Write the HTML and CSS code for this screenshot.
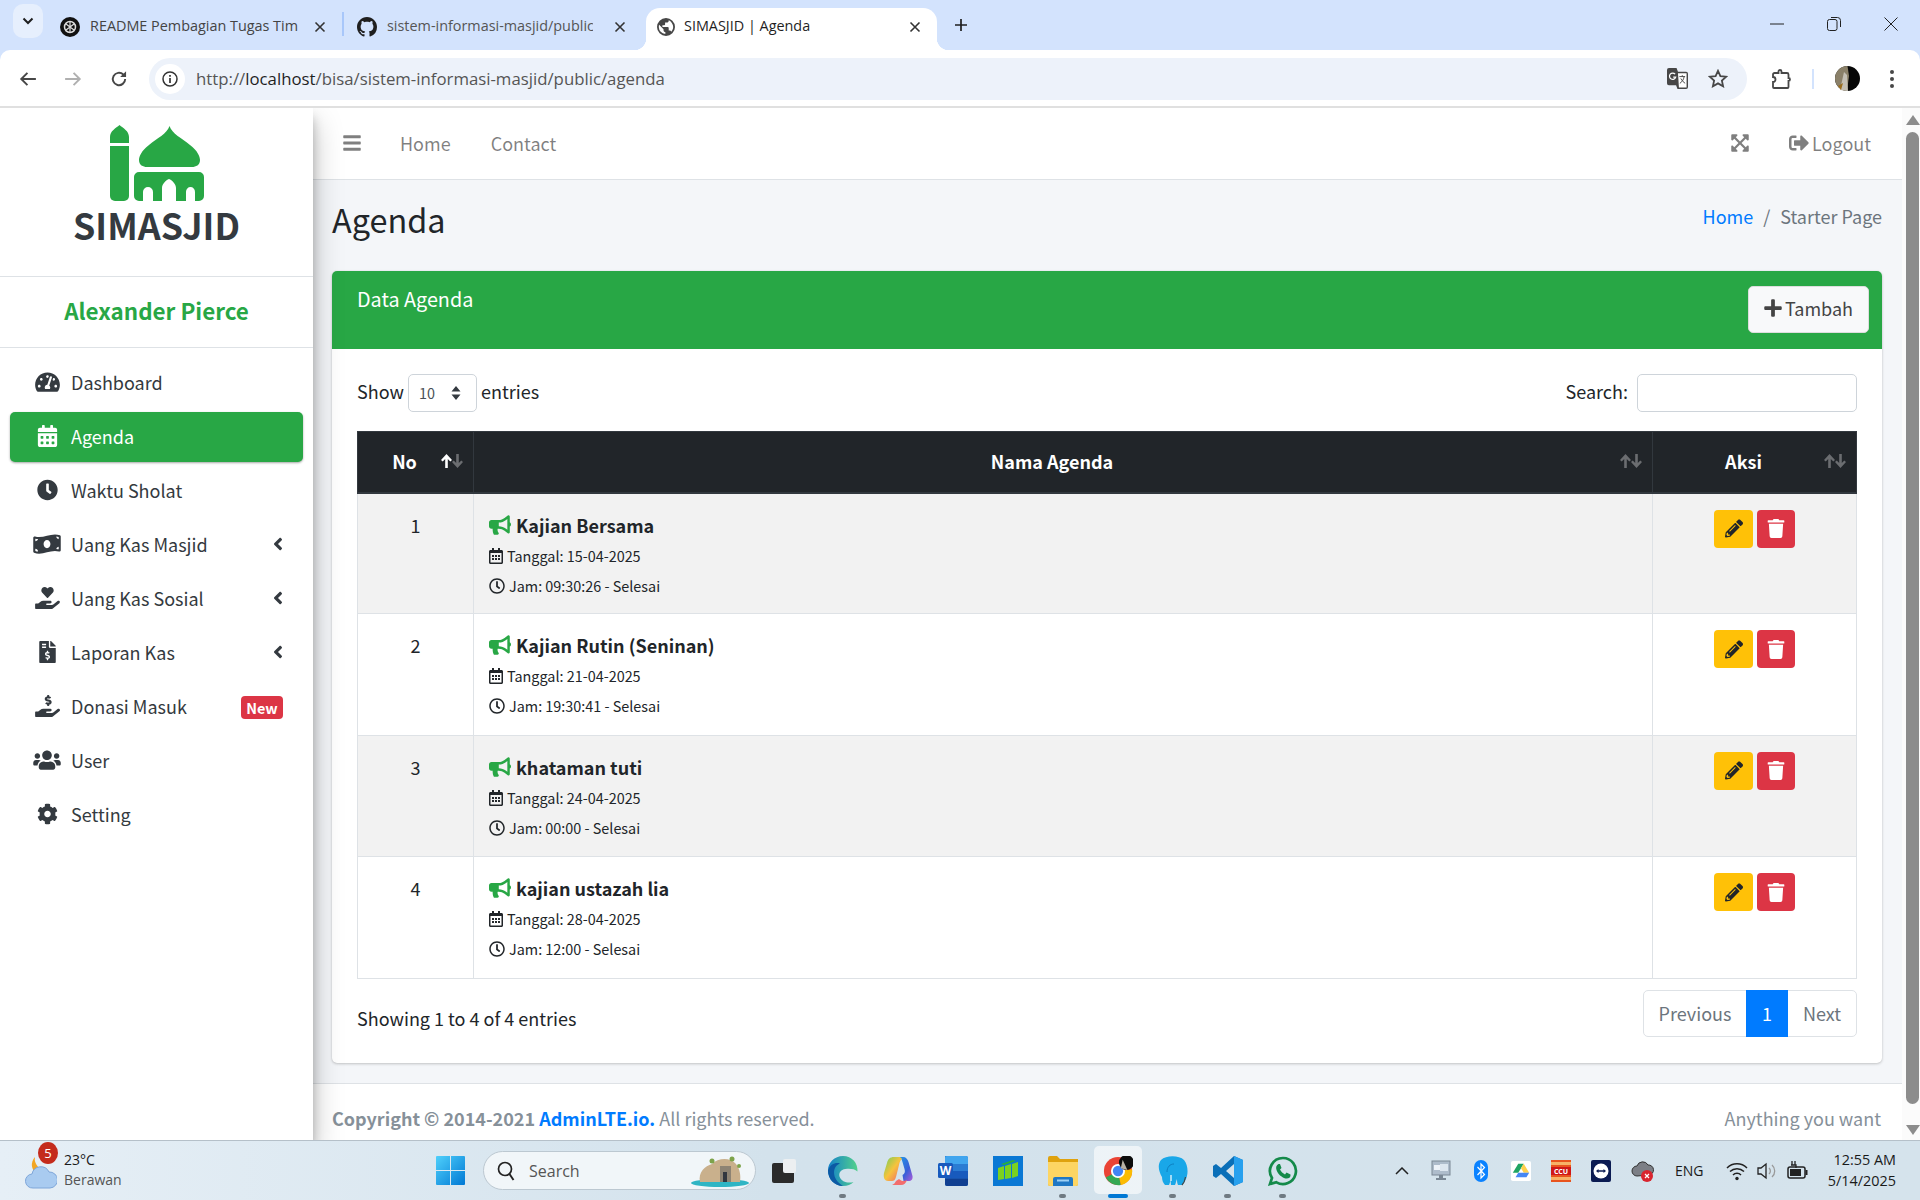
FILE: index.html
```html
<!DOCTYPE html>
<html lang="en">
<head>
    <meta charset="UTF-8">
    <meta name="viewport" content="width=device-width, initial-scale=1.0">
    <title>SIMASJID | Agenda</title>
    <link rel="stylesheet" href="styles.css">
</head>
<body>
    <svg class="sprite">
        <symbol id="i-gauge" viewBox="0 0 576 512"><path d="M288 32C128.94 32 0 160.94 0 320c0 52.8 14.25 102.26 39.06 144.8 5.61 9.62 16.3 15.2 27.44 15.2h443c11.14 0 21.83-5.58 27.44-15.2C561.75 422.26 576 372.8 576 320c0-159.06-128.94-288-288-288zm0 64c14.71 0 26.58 10.13 30.32 23.65-1.11 2.26-2.64 4.23-3.45 6.67l-9.22 27.67c-5.13 3.49-10.97 6.01-17.64 6.01-17.67 0-32-14.33-32-32S270.33 96 288 96zM96 384c-17.67 0-32-14.33-32-32s14.33-32 32-32 32 14.33 32 32-14.33 32-32 32zm48-160c-17.67 0-32-14.33-32-32s14.33-32 32-32 32 14.33 32 32-14.33 32-32 32zm246.77-72.41l-61.33 184C343.13 347.33 352 364.54 352 384c0 11.72-3.38 22.55-8.88 32H232.88c-5.5-9.45-8.88-20.28-8.88-32 0-33.94 26.5-61.43 59.9-63.59l61.34-184.01c4.17-12.56 17.73-19.45 30.36-15.17 12.57 4.19 19.35 17.79 15.17 30.36zm14.66 57.2l15.52-46.55c3.47-1.29 7.13-2.23 11.05-2.23 17.67 0 32 14.33 32 32s-14.33 32-32 32c-11.38-.01-20.89-6.28-26.57-15.22zM480 384c-17.67 0-32-14.33-32-32s14.33-32 32-32 32 14.33 32 32-14.33 32-32 32z"/></symbol>
        <symbol id="i-calendar" viewBox="0 0 448 512"><path d="M0 464c0 26.5 21.5 48 48 48h352c26.5 0 48-21.5 48-48V192H0v272zm320-196c0-6.6 5.4-12 12-12h40c6.6 0 12 5.4 12 12v40c0 6.6-5.4 12-12 12h-40c-6.6 0-12-5.4-12-12v-40zm0 128c0-6.6 5.4-12 12-12h40c6.6 0 12 5.4 12 12v40c0 6.6-5.4 12-12 12h-40c-6.6 0-12-5.4-12-12v-40zM192 268c0-6.6 5.4-12 12-12h40c6.6 0 12 5.4 12 12v40c0 6.6-5.4 12-12 12h-40c-6.6 0-12-5.4-12-12v-40zm0 128c0-6.6 5.4-12 12-12h40c6.6 0 12 5.4 12 12v40c0 6.6-5.4 12-12 12h-40c-6.6 0-12-5.4-12-12v-40zM64 268c0-6.6 5.4-12 12-12h40c6.6 0 12 5.4 12 12v40c0 6.6-5.4 12-12 12H76c-6.6 0-12-5.4-12-12v-40zm0 128c0-6.6 5.4-12 12-12h40c6.6 0 12 5.4 12 12v40c0 6.6-5.4 12-12 12H76c-6.6 0-12-5.4-12-12v-40zM400 64h-48V16c0-8.8-7.2-16-16-16h-32c-8.8 0-16 7.2-16 16v48H160V16c0-8.8-7.2-16-16-16h-32c-8.8 0-16 7.2-16 16v48H48C21.5 64 0 85.5 0 112v48h448v-48c0-26.5-21.5-48-48-48z"/></symbol>
        <symbol id="i-clock" viewBox="0 0 512 512"><path d="M256,8C119,8,8,119,8,256S119,504,256,504,504,393,504,256,393,8,256,8Zm92.49,313h0l-20,25a16,16,0,0,1-22.49,2.5h0l-67-49.72a40,40,0,0,1-15-31.23V112a16,16,0,0,1,16-16h32a16,16,0,0,1,16,16V256l58,42.5A16,16,0,0,1,348.49,321Z"/></symbol>
        <symbol id="i-money" viewBox="0 0 640 512"><path d="M621.16 54.46C582.37 38.19 543.55 32 504.75 32c-123.17-.01-246.33 62.34-369.5 62.34-30.89 0-61.76-3.92-92.65-13.72-3.47-1.1-6.95-1.62-10.35-1.62C15.04 79 0 92.32 0 110.81v317.26c0 12.63 7.23 24.6 18.84 29.46C57.63 473.81 96.45 480 135.25 480c123.17 0 246.34-62.35 369.51-62.35 30.89 0 61.76 3.92 92.65 13.72 3.47 1.1 6.95 1.62 10.35 1.62 17.21 0 32.25-13.32 32.25-31.81V83.93c-.01-12.64-7.24-24.6-18.85-29.47zM48 132.22c20.12 5.04 41.12 7.57 62.72 8.93C104.84 170.54 79 192.69 48 192.69v-60.47zm0 285v-47.78c34.37 0 62.18 27.27 63.71 61.4-22.53-1.81-43.59-6.31-63.71-13.62zM320 352c-44.19 0-80-42.99-80-96 0-53.02 35.82-96 80-96s80 42.98 80 96c0 53.03-35.83 96-80 96zm272 27.78c-17.52-4.39-35.71-6.85-54.32-8.44 5.87-26.08 27.5-45.88 54.32-49.28v57.72zm0-236.11c-30.89-3.91-54.86-29.7-55.81-61.55 19.54 2.17 38.09 6.23 55.81 12.66v48.89z"/></symbol>
        <symbol id="i-hand-heart" viewBox="0 0 576 512"><path d="M275.3 250.5c7 7.4 18.4 7.4 25.5 0l108.9-114.2c31.6-33.2 29.8-88.2-5.6-118.8-30.8-26.7-76.7-21.9-104.9 7.7L288 36.9l-11.1-11.6C248.7-4.4 202.8-9.2 172 17.5c-35.3 30.6-37.2 85.6-5.6 118.8l108.9 114.2zm290 77.6c-11.8-10.7-30.2-10-42.6 0L430.3 402c-11.3 9.1-25.4 14-40 14H272c-8.8 0-16-7.2-16-16s7.2-16 16-16h78.3c15.9 0 30.7-10.9 33.3-26.6 3.3-20-12.1-37.4-31.6-37.4H192c-27 0-53.1 9.3-74.1 26.3L71.4 384H16c-8.8 0-16 7.2-16 16v96c0 8.8 7.2 16 16 16h356.8c14.5 0 28.6-4.9 40-14L564 377c15.2-12.1 16.4-35.3 1.3-48.9z"/></symbol>
        <symbol id="i-invoice" viewBox="0 0 384 512"><path d="M377 105L279.1 7c-4.5-4.5-10.6-7-17-7H256v128h128v-6.1c0-6.3-2.5-12.4-7-16.9zm-153 31V0H24C10.7 0 0 10.7 0 24v464c0 13.3 10.7 24 24 24h336c13.3 0 24-10.7 24-24V160H248c-13.2 0-24-10.8-24-24zM64 72c0-4.42 3.58-8 8-8h80c4.42 0 8 3.58 8 8v16c0 4.42-3.58 8-8 8H72c-4.42 0-8-3.58-8-8V72zm0 80v-16c0-4.42 3.58-8 8-8h80c4.42 0 8 3.58 8 8v16c0 4.42-3.58 8-8 8H72c-4.42 0-8-3.58-8-8zm144 263.88V440c0 4.42-3.58 8-8 8h-16c-4.42 0-8-3.58-8-8v-24.29c-11.29-.58-22.27-4.52-31.37-11.35-3.9-2.93-4.1-8.77-.57-12.14l11.75-11.21c2.77-2.64 6.89-2.76 10.13-.73 3.87 2.42 8.26 3.72 12.82 3.72h28.11c6.5 0 11.8-5.92 11.8-13.19 0-5.95-3.61-11.19-8.77-12.73l-45-13.5c-18.59-5.58-31.58-23.42-31.58-43.39 0-24.52 19.05-44.44 42.67-45.07V232c0-4.42 3.58-8 8-8h16c4.42 0 8 3.58 8 8v24.29c11.29.58 22.27 4.51 31.37 11.35 3.9 2.93 4.1 8.77.57 12.14l-11.75 11.21c-2.77 2.64-6.89 2.76-10.13.73-3.87-2.43-8.26-3.72-12.82-3.72h-28.11c-6.5 0-11.8 5.92-11.8 13.19 0 5.95 3.61 11.19 8.77 12.73l45 13.5c18.59 5.58 31.58 23.42 31.58 43.39 0 24.53-19.05 44.44-42.67 45.07z"/></symbol>
        <symbol id="i-hand-usd" viewBox="0 0 576 512"><path d="M271.06,144.3l54.27,14.3a8.59,8.59,0,0,1,6.63,8.1c0,4.6-4.09,8.4-9.12,8.4h-35.6a30,30,0,0,1-11.19-2.2c-5.24-2.2-11.28-1.7-15.3,2l-19,17.5a11.68,11.68,0,0,0-2.25,2.66,11.42,11.42,0,0,0,3.88,15.74,83.42,83.42,0,0,0,34.51,11.5V240c0,8.8,7.83,16,17.37,16h17.37c9.55,0,17.38-7.2,17.38-16V222.4c32.93-3.6,57.84-31,53.5-63-3.15-23-22.46-41.3-46.56-47.7L282.68,97.4a8.59,8.59,0,0,1-6.63-8.1c0-4.6,4.09-8.4,9.12-8.4h35.6A30,30,0,0,1,332,83.1c5.23,2.2,11.28,1.7,15.3-2l19-17.5A11.31,11.31,0,0,0,368.47,61a11.43,11.43,0,0,0-3.84-15.78,83.82,83.82,0,0,0-34.52-11.5V16c0-8.8-7.82-16-17.37-16H295.37C285.82,0,278,7.2,278,16V33.6c-32.89,3.6-57.85,31-53.51,63C227.63,119.6,247,137.9,271.06,144.3ZM565.27,328.1c-11.8-10.7-30.2-10-42.6,0L430.27,402a63.64,63.64,0,0,1-40,14H272a16,16,0,0,1,0-32h78.29c15.9,0,30.71-10.9,33.25-26.6a31.2,31.2,0,0,0,.46-5.46A32,32,0,0,0,352,320H192a117.66,117.66,0,0,0-74.1,26.29L71.4,384H16A16,16,0,0,0,0,400v96a16,16,0,0,0,16,16H372.77a64,64,0,0,0,40-14L564,377a32,32,0,0,0,1.28-48.9Z"/></symbol>
        <symbol id="i-users" viewBox="0 0 640 512"><path d="M96 224c35.3 0 64-28.7 64-64s-28.7-64-64-64-64 28.7-64 64 28.7 64 64 64zm448 0c35.3 0 64-28.7 64-64s-28.7-64-64-64-64 28.7-64 64 28.7 64 64 64zm32 32h-64c-17.6 0-33.5 7.1-45.1 18.6 40.3 22.1 68.9 62 75.1 109.4h66c17.7 0 32-14.3 32-32v-32c0-35.3-28.7-64-64-64zm-256 0c61.9 0 112-50.1 112-112S381.9 32 320 32 208 82.1 208 144s50.1 112 112 112zm76.8 32h-8.3c-20.8 10-43.9 16-68.5 16s-47.6-6-68.5-16h-8.3C179.6 288 128 339.6 128 403.2V432c0 26.5 21.5 48 48 48h288c26.5 0 48-21.5 48-48v-28.8c0-63.6-51.6-115.2-115.2-115.2zm-223.7-13.4C161.5 263.1 145.6 256 128 256H64c-35.3 0-64 28.7-64 64v32c0 17.7 14.3 32 32 32h65.9c6.3-47.4 34.9-87.3 75.2-109.4z"/></symbol>
        <symbol id="i-cog" viewBox="0 0 512 512"><path d="M487.4 315.7l-42.6-24.6c4.3-23.2 4.3-47 0-70.2l42.6-24.6c4.9-2.8 7.1-8.6 5.5-14-11.1-35.6-30-67.8-54.7-94.6-3.8-4.1-10-5.1-14.8-2.3L380.8 110c-17.9-15.4-38.5-27.3-60.8-35.1V25.8c0-5.6-3.9-10.5-9.4-11.7-36.7-8.2-74.3-7.8-109.2 0-5.5 1.2-9.4 6.1-9.4 11.7V75c-22.2 7.9-42.8 19.8-60.8 35.1L88.7 85.5c-4.9-2.8-11-1.9-14.8 2.3-24.7 26.7-43.6 58.9-54.7 94.6-1.7 5.4.6 11.2 5.5 14L67.3 221c-4.3 23.2-4.3 47 0 70.2l-42.6 24.6c-4.9 2.8-7.1 8.6-5.5 14 11.1 35.6 30 67.8 54.7 94.6 3.8 4.1 10 5.1 14.8 2.3l42.6-24.6c17.9 15.4 38.5 27.3 60.8 35.1v49.2c0 5.6 3.9 10.5 9.4 11.7 36.7 8.2 74.3 7.8 109.2 0 5.5-1.2 9.4-6.1 9.4-11.7v-49.2c22.2-7.9 42.8-19.8 60.8-35.1l42.6 24.6c4.9 2.8 11 1.9 14.8-2.3 24.7-26.7 43.6-58.9 54.7-94.6 1.5-5.5-.7-11.3-5.6-14.1zM256 336c-44.1 0-80-35.9-80-80s35.9-80 80-80 80 35.9 80 80-35.9 80-80 80z"/></symbol>
        <symbol id="i-angle" viewBox="0 0 256 512"><path d="M31.7 239l136-136c9.4-9.4 24.6-9.4 33.9 0l22.6 22.6c9.4 9.4 9.4 24.6 0 33.9L127.9 256l96.4 96.4c9.4 9.4 9.4 24.6 0 33.9L201.7 409c-9.4 9.4-24.6 9.4-33.9 0l-136-136c-9.5-9.4-9.5-24.6-.1-34z"/></symbol>
        <symbol id="i-bars" viewBox="0 0 448 512"><path d="M16 132h416c8.837 0 16-7.163 16-16V76c0-8.837-7.163-16-16-16H16C7.163 60 0 67.163 0 76v40c0 8.837 7.163 16 16 16zm0 160h416c8.837 0 16-7.163 16-16v-40c0-8.837-7.163-16-16-16H16c-8.837 0-16 7.163-16 16v40c0 8.837 7.163 16 16 16zm0 160h416c8.837 0 16-7.163 16-16v-40c0-8.837-7.163-16-16-16H16c-8.837 0-16 7.163-16 16v40c0 8.837 7.163 16 16 16z"/></symbol>
        <symbol id="i-expand" viewBox="0 0 448 512"><path d="M448 344v112a23.94 23.94 0 0 1-24 24H312c-21.39 0-32.09-25.9-17-41l36.2-36.2L224 295.6 116.77 402.9 153 439c15.09 15.1 4.39 41-17 41H24a23.94 23.94 0 0 1-24-24V344c0-21.4 25.89-32.1 41-17l36.19 36.2L184.46 256 77.18 148.7 41 185c-15.1 15.1-41 4.4-41-17V56a23.94 23.94 0 0 1 24-24h112c21.39 0 32.09 25.9 17 41l-36.2 36.2L224 216.4l107.23-107.3L295 73c-15.09-15.1-4.39-41 17-41h112a23.94 23.94 0 0 1 24 24v112c0 21.4-25.89 32.1-41 17l-36.19-36.2L263.54 256l107.28 107.3L407 327.1c15.1-15.2 41-4.5 41 16.9z"/></symbol>
        <symbol id="i-logout" viewBox="0 0 512 512"><path d="M497 273L329 441c-15 15-41 4.5-41-17v-96H152c-13.3 0-24-10.7-24-24v-96c0-13.3 10.7-24 24-24h136V88c0-21.4 25.9-32 41-17l168 168c9.3 9.4 9.3 24.6 0 34zM192 436v-40c0-6.6-5.4-12-12-12H96c-17.7 0-32-14.3-32-32V160c0-17.7 14.3-32 32-32h84c6.6 0 12-5.4 12-12V76c0-6.6-5.4-12-12-12H96c-53 0-96 43-96 96v192c0 53 43 96 96 96h84c6.6 0 12-5.4 12-12z"/></symbol>
        <symbol id="i-plus" viewBox="0 0 448 512"><path d="M416 208H272V64c0-17.67-14.33-32-32-32h-32c-17.67 0-32 14.33-32 32v144H32c-17.67 0-32 14.33-32 32v32c0 17.67 14.33 32 32 32h144v144c0 17.67 14.33 32 32 32h32c17.67 0 32-14.33 32-32V304h144c17.67 0 32-14.33 32-32v-32c0-17.67-14.33-32-32-32z"/></symbol>
        <symbol id="i-bullhorn" viewBox="0 0 576 512"><path d="M576 240c0-23.63-12.95-44.04-32-55.12V32.01C544 23.26 537.02 0 512 0c-7.12 0-14.19 2.38-19.98 7.02l-85.03 68.03C364.28 109.19 310.66 128 256 128H64c-35.35 0-64 28.65-64 64v96c0 35.35 28.65 64 64 64h33.7c-1.39 10.48-2.18 21.14-2.18 32 0 39.77 9.26 77.35 25.56 110.94 5.19 10.69 16.52 17.06 28.4 17.06h74.28c26.05 0 41.69-29.84 25.9-50.56-16.4-21.52-26.15-48.36-26.15-77.44 0-11.11 1.62-21.79 4.41-32H256c54.66 0 108.28 18.81 150.98 52.95l85.03 68.03a32.023 32.023 0 0 0 19.98 7.02c24.92 0 32-22.78 32-32V295.13C563.05 284.04 576 263.63 576 240zm-96 141.42l-33.05-26.44C392.95 311.78 325.12 288 256 288v-96c69.12 0 136.95-23.78 190.95-66.98L480 98.58v282.84z"/></symbol>
        <symbol id="i-cal-line" viewBox="0 0 448 512"><path d="M148 288h-40c-6.6 0-12-5.4-12-12v-40c0-6.6 5.4-12 12-12h40c6.6 0 12 5.4 12 12v40c0 6.6-5.4 12-12 12zm108-12v-40c0-6.6-5.4-12-12-12h-40c-6.6 0-12 5.4-12 12v40c0 6.6 5.4 12 12 12h40c6.6 0 12-5.4 12-12zm96 0v-40c0-6.6-5.4-12-12-12h-40c-6.6 0-12 5.4-12 12v40c0 6.6 5.4 12 12 12h40c6.6 0 12-5.4 12-12zm-96 96v-40c0-6.6-5.4-12-12-12h-40c-6.6 0-12 5.4-12 12v40c0 6.6 5.4 12 12 12h40c6.6 0 12-5.4 12-12zm-96 0v-40c0-6.6-5.4-12-12-12h-40c-6.6 0-12 5.4-12 12v40c0 6.6 5.4 12 12 12h40c6.6 0 12-5.4 12-12zm192 0v-40c0-6.6-5.4-12-12-12h-40c-6.6 0-12 5.4-12 12v40c0 6.6 5.4 12 12 12h40c6.6 0 12-5.4 12-12zm96-260v352c0 26.5-21.5 48-48 48H48c-26.5 0-48-21.5-48-48V112c0-26.5 21.5-48 48-48h48V12c0-6.6 5.4-12 12-12h40c6.6 0 12 5.4 12 12v52h128V12c0-6.6 5.4-12 12-12h40c6.6 0 12 5.4 12 12v52h48c26.5 0 48 21.5 48 48zm-48 346V160H48v298c0 3.3 2.7 6 6 6h340c3.3 0 6-2.7 6-6z"/></symbol>
        <symbol id="i-clock-line" viewBox="0 0 512 512"><path d="M256 8C119 8 8 119 8 256s111 248 248 248 248-111 248-248S393 8 256 8zm0 448c-110.5 0-200-89.5-200-200S145.5 56 256 56s200 89.5 200 200-89.5 200-200 200zm61.8-104.4l-84.9-61.7c-3.1-2.3-4.9-5.9-4.9-9.7V116c0-6.6 5.4-12 12-12h32c6.6 0 12 5.4 12 12v141.7l66.8 48.6c5.4 3.9 6.5 11.4 2.6 16.8L334.6 349c-3.9 5.3-11.4 6.5-16.8 2.6z"/></symbol>
        <symbol id="i-pencil" viewBox="0 0 512 512"><path d="M497.9 142.1l-46.1 46.1c-4.7 4.7-12.3 4.7-17 0l-111-111c-4.7-4.7-4.7-12.3 0-17l46.1-46.1c18.7-18.7 49.1-18.7 67.9 0l60.1 60.1c18.8 18.7 18.8 49.1 0 67.9zM284.2 99.8L21.6 362.4.4 483.9c-2.9 16.4 11.4 30.6 27.8 27.8l121.5-21.3 262.6-262.6c4.7-4.7 4.7-12.3 0-17l-111-111c-4.8-4.7-12.4-4.7-17.1 0zM124.1 339.9c-5.5-5.5-5.5-14.3 0-19.8l154-154c5.5-5.5 14.3-5.5 19.8 0s5.5 14.3 0 19.8l-154 154c-5.5 5.5-14.3 5.5-19.8 0zM88 424h48v36.3l-64.5 11.3-31.1-31.1L51.7 376H88v48z"/></symbol>
        <symbol id="i-trash" viewBox="0 0 448 512"><path d="M432 32H312l-9.4-18.7A24 24 0 0 0 281.1 0H166.8a23.72 23.72 0 0 0-21.4 13.3L136 32H16A16 16 0 0 0 0 48v32a16 16 0 0 0 16 16h416a16 16 0 0 0 16-16V48a16 16 0 0 0-16-16zM53.2 467a48 48 0 0 0 47.9 45h245.8a48 48 0 0 0 47.9-45L416 128H32z"/></symbol>
        <symbol id="i-sort" viewBox="0 0 22 14"><path class="sort-up" d="M5.500 0L11 6 9.300 7.600 6.800 5V14H4.200V5L1.700 7.600 0 6z"/><path d="M16.500 14L11 8 12.700 6.400 15.200 9V0H17.800V9L20.300 6.400 22 8z"/></symbol>
        <symbol id="i-close" viewBox="0 0 12 12"><path d="M1.500 1.500l9 9M10.500 1.500l-9 9" fill="none" stroke="currentColor" stroke-width="1.600"/></symbol>
        <symbol id="i-globe" viewBox="0 0 16 16"><path d="M8 0a8 8 0 1 0 0 16A8 8 0 0 0 8 0zM1.600 8c0-.7.1-1.300.3-1.900l3.900 3.900v.8c0 .9.7 1.600 1.600 1.600v1.900A6.400 6.400 0 0 1 1.600 8zm11.100 4.300a1.600 1.600 0 0 0-1.500-1.100h-.8V8.800a.8.800 0 0 0-.8-.8H4.800V6.400h1.600a.8.800 0 0 0 .8-.8V4h1.600c.9 0 1.600-.7 1.600-1.600v-.3a6.400 6.400 0 0 1 2.300 10.200z"/></symbol>
    </svg>

    <div class="tabstrip">
        <div class="tab-list-btn">
            <svg width="12" height="8" viewBox="0 0 12 8"><path d="M1.500 1.500L6 6l4.500-4.500" fill="none" stroke="#1f1f1f" stroke-width="2"/></svg>
        </div>
        <div class="tab tab-first">
            <svg class="tab-icon" viewBox="0 0 20 20"><circle cx="10" cy="10" r="10" fill="#111"/><circle cx="10" cy="10" r="5.500" fill="none" stroke="#ddd" stroke-width="1.500"/><path d="M6 7l8 6M14 7l-8 6M10 4.500v11" stroke="#ddd" stroke-width="1.200"/></svg>
            <span class="tab-title">README Pembagian Tugas Tim</span>
            <svg class="tab-close"><use href="#i-close"/></svg>
        </div>
        <div class="tab-sep"></div>
        <div class="tab tab-second">
            <svg class="tab-icon" viewBox="0 0 16 16"><path fill="#1f1f1f" d="M8 0C3.580 0 0 3.580 0 8c0 3.540 2.290 6.530 5.470 7.590.4.070.55-.17.55-.38 0-.19-.01-.82-.01-1.490-2.010.37-2.530-.49-2.690-.94-.09-.23-.48-.94-.82-1.130-.28-.15-.68-.52-.01-.53.63-.01 1.080.58 1.230.82.720 1.210 1.870.870 2.330.660.070-.520.280-.870.510-1.070-1.780-.2-3.640-.890-3.640-3.950 0-.870.310-1.590.820-2.150-.08-.2-.36-1.020.08-2.120 0 0 .670-.210 2.200.820.640-.180 1.320-.270 2-.270s1.360.090 2 .270c1.530-1.040 2.200-.820 2.200-.820.440 1.100.160 1.920.080 2.120.510.560.820 1.270.820 2.150 0 3.070-1.870 3.750-3.650 3.950.290.250.540.730.540 1.480 0 1.070-.010 1.930-.010 2.200 0 .210.150.460.550.380A8.010 8.010 0 0 0 16 8c0-4.420-3.580-8-8-8z"/></svg>
            <span class="tab-title tab-fade">sistem-informasi-masjid/public</span>
            <svg class="tab-close"><use href="#i-close"/></svg>
        </div>
        <div class="tab tab-active">
            <svg class="tab-icon globe"><use href="#i-globe"/></svg>
            <span class="tab-title">SIMASJID | Agenda</span>
            <svg class="tab-close"><use href="#i-close"/></svg>
        </div>
        <svg class="new-tab" viewBox="0 0 14 14"><path d="M7 1v12M1 7h12" stroke="#1f1f1f" stroke-width="1.700"/></svg>
        <div class="win-buttons">
            <svg width="14" height="14" viewBox="0 0 14 14"><path d="M0 7h14" stroke="#222" stroke-width="1"/></svg>
            <svg width="14" height="14" viewBox="0 0 14 14"><rect x=".5" y="2.500" width="9.500" height="11" rx="2" fill="none" stroke="#222"/><path d="M4 .5h6.500a3 3 0 0 1 3 3V10" fill="none" stroke="#222"/></svg>
            <svg width="14" height="14" viewBox="0 0 14 14"><path d="M.5.5l13 13M13.500.5l-13 13" stroke="#222"/></svg>
        </div>
    </div>

    <div class="toolbar">
        <svg class="nav-btn" viewBox="0 0 16 16"><path d="M15 8H2M7.500 2.500L2 8l5.500 5.500" fill="none" stroke="#474747" stroke-width="1.700"/></svg>
        <svg class="nav-btn nav-forward" viewBox="0 0 16 16"><path d="M1 8h13M8.500 2.500L14 8l-5.500 5.500" fill="none" stroke="#b0b0b0" stroke-width="1.700"/></svg>
        <svg class="nav-btn nav-reload" viewBox="0 0 16 16"><path d="M13.500 8a5.500 5.500 0 1 1-1.700-4L13.500 5.500" fill="none" stroke="#474747" stroke-width="1.700"/><path d="M14.300 1v5.300H9z" fill="#474747"/></svg>
        <div class="omnibox">
            <span class="site-info"><svg width="16" height="16" viewBox="0 0 16 16"><circle cx="8" cy="8" r="7" fill="none" stroke="#333" stroke-width="1.500"/><path d="M8 7v5M8 4v1.700" stroke="#333" stroke-width="1.700"/></svg></span>
            <span class="url">http://<b>localhost</b>/bisa/sistem-informasi-masjid/public/agenda</span>
            <svg class="omni-translate" viewBox="0 0 22 22"><path d="M2 0h8l1.500 4H20a2 2 0 0 1 2 2v14a2 2 0 0 1-2 2h-9l-1.500-4H2a2 2 0 0 1-2-2V2a2 2 0 0 1 2-2z" fill="#474747"/><path d="M11.500 5.500h9v15h-8z" fill="#fff"/><path d="M13 9h6M16 7.500V9M18 9c-.5 3-2.500 6-4.500 7M14.500 11c1 2 3 4 4.500 5" stroke="#474747" fill="none"/><path d="M8.500 6.500a3.300 3.300 0 1 0 .6 3H6.500" fill="none" stroke="#fff" stroke-width="1.300"/></svg>
            <svg class="omni-star" viewBox="0 0 20 19"><path d="M10 1.800l2.400 5.300 5.800.6-4.300 3.900 1.200 5.700-5.100-2.900-5.100 2.900 1.200-5.700L1.800 7.700l5.800-.6z" fill="none" stroke="#474747" stroke-width="1.800"/></svg>
        </div>
        <svg class="tool-puzzle" viewBox="0 0 20 20"><path d="M7.500 4V2.500a1.500 1.500 0 0 1 3 0V4H16a1.500 1.500 0 0 1 1.500 1.500V9a1.500 1.500 0 0 1 0 3v6a1 1 0 0 1-1 1H3a1 1 0 0 1-1-1v-5a2 2 0 0 0 0-5V5.500A1.500 1.500 0 0 1 3.500 4z" fill="none" stroke="#474747" stroke-width="1.800"/></svg>
        <div class="tool-sep"></div>
        <svg class="avatar" viewBox="0 0 25 25"><circle cx="12.500" cy="12.500" r="12.500" fill="#060606"/><path d="M12.500 0C5 0 0 6 0 12.500 0 19 5 25 12 25L14 10z" fill="#8a8069"/><path d="M5 24L9 6l3 3 1 16z" fill="#c4bfb4"/><path d="M3 20l3 4 2-7z" fill="#9a6d1f"/></svg>
        <svg class="kebab" viewBox="0 0 4 18"><circle cx="2" cy="2" r="2" fill="#474747"/><circle cx="2" cy="9" r="2" fill="#474747"/><circle cx="2" cy="16" r="2" fill="#474747"/></svg>
    </div>

    <div class="page">
        <aside class="sidebar">
            <div class="brand">
                <svg class="brand-logo" viewBox="0 0 94 76">
                    <path d="M0 18V12C0 6 6 3 9.500 0 13 3 19 6 19 12V18Z"/>
                    <path d="M0 21H19V71a5 5 0 0 1-5 5H5a5 5 0 0 1-5-5Z"/>
                    <path d="M59.500 1C62 9 72 13 80 20 88 26 90 32 90 35 90 40 86 42 82 42H37C33 42 29 40 29 35 29 32 31 26 39 20 47 13 57 9 59.500 1Z"/>
                    <path d="M29 47H89a5 5 0 0 1 5 5V71a5 5 0 0 1-5 5H85V67a4.500 5 0 0 0-9 0V76H66V63C66 59 62 55 59 54 56 55 52 59 52 63V76H43V67a5 5 0 0 0-10 0V76H29a5 5 0 0 1-5-5V52a5 5 0 0 1 5-5Z"/>
                </svg>
                <div class="brand-name">SIMASJID</div>
            </div>
            <div class="user-name">Alexander Pierce</div>
            <nav class="menu">
                <a class="menu-item"><span class="menu-icon"><svg class="w24"><use href="#i-gauge"/></svg></span>Dashboard</a>
                <a class="menu-item active"><span class="menu-icon"><svg class="w21"><use href="#i-calendar"/></svg></span>Agenda</a>
                <a class="menu-item"><span class="menu-icon"><svg class="w21"><use href="#i-clock"/></svg></span>Waktu Sholat</a>
                <a class="menu-item"><span class="menu-icon"><svg class="w27"><use href="#i-money"/></svg></span>Uang Kas Masjid<svg class="chevron"><use href="#i-angle"/></svg></a>
                <a class="menu-item"><span class="menu-icon"><svg class="w25"><use href="#i-hand-heart"/></svg></span>Uang Kas Sosial<svg class="chevron"><use href="#i-angle"/></svg></a>
                <a class="menu-item"><span class="menu-icon"><svg class="w21"><use href="#i-invoice"/></svg></span>Laporan Kas<svg class="chevron"><use href="#i-angle"/></svg></a>
                <a class="menu-item"><span class="menu-icon"><svg class="w25"><use href="#i-hand-usd"/></svg></span>Donasi Masuk<span class="badge-new">New</span></a>
                <a class="menu-item"><span class="menu-icon"><svg class="w27"><use href="#i-users"/></svg></span>User</a>
                <a class="menu-item"><span class="menu-icon"><svg class="w21"><use href="#i-cog"/></svg></span>Setting</a>
            </nav>
        </aside>

        <div class="main">
            <header class="navbar">
                <svg class="nav-bars"><use href="#i-bars"/></svg>
                <a class="nav-link">Home</a>
                <a class="nav-link">Contact</a>
                <div class="nav-right">
                    <svg class="nav-expand"><use href="#i-expand"/></svg>
                    <a class="nav-logout"><svg class="logout-icon"><use href="#i-logout"/></svg>Logout</a>
                </div>
            </header>

            <div class="content">
                <div class="content-header">
                    <h1>Agenda</h1>
                    <div class="breadcrumb"><a>Home</a><span class="crumb-sep">/</span><span>Starter Page</span></div>
                </div>

                <section class="card">
                    <div class="card-header">
                        <h3>Data Agenda</h3>
                        <button class="btn-add"><svg class="plus-icon"><use href="#i-plus"/></svg>Tambah</button>
                    </div>
                    <div class="card-body">
                        <div class="table-controls">
                            <label class="length">Show <span class="select">10<svg viewBox="0 0 10 16" width="10" height="16"><path d="M5 1l4.500 5.500h-9zM5 15L.5 9.500h9z" fill="#343a40"/></svg></span> entries</label>
                            <label class="search">Search: <input type="text"></label>
                        </div>

                        <table class="agenda-table">
                            <thead>
                                <tr>
                                    <th class="col-no">No<svg class="sort sort-asc"><use href="#i-sort"/></svg></th>
                                    <th>Nama Agenda<svg class="sort"><use href="#i-sort"/></svg></th>
                                    <th class="col-aksi">Aksi<svg class="sort"><use href="#i-sort"/></svg></th>
                                </tr>
                            </thead>
                            <tbody>
                                <tr>
                                    <td class="cell-no">1</td>
                                    <td>
                                        <div class="agenda-title"><svg class="horn"><use href="#i-bullhorn"/></svg>Kajian Bersama</div>
                                        <div class="agenda-meta"><svg class="meta-cal"><use href="#i-cal-line"/></svg>Tanggal: 15-04-2025</div>
                                        <div class="agenda-meta"><svg class="meta-clock"><use href="#i-clock-line"/></svg>Jam: 09:30:26 - Selesai</div>
                                    </td>
                                    <td class="cell-aksi"><div class="actions"><a class="btn-edit"><svg><use href="#i-pencil"/></svg></a><a class="btn-del"><svg><use href="#i-trash"/></svg></a></div></td>
                                </tr>
                                <tr>
                                    <td class="cell-no">2</td>
                                    <td>
                                        <div class="agenda-title"><svg class="horn"><use href="#i-bullhorn"/></svg>Kajian Rutin (Seninan)</div>
                                        <div class="agenda-meta"><svg class="meta-cal"><use href="#i-cal-line"/></svg>Tanggal: 21-04-2025</div>
                                        <div class="agenda-meta"><svg class="meta-clock"><use href="#i-clock-line"/></svg>Jam: 19:30:41 - Selesai</div>
                                    </td>
                                    <td class="cell-aksi"><div class="actions"><a class="btn-edit"><svg><use href="#i-pencil"/></svg></a><a class="btn-del"><svg><use href="#i-trash"/></svg></a></div></td>
                                </tr>
                                <tr>
                                    <td class="cell-no">3</td>
                                    <td>
                                        <div class="agenda-title"><svg class="horn"><use href="#i-bullhorn"/></svg>khataman tuti</div>
                                        <div class="agenda-meta"><svg class="meta-cal"><use href="#i-cal-line"/></svg>Tanggal: 24-04-2025</div>
                                        <div class="agenda-meta"><svg class="meta-clock"><use href="#i-clock-line"/></svg>Jam: 00:00 - Selesai</div>
                                    </td>
                                    <td class="cell-aksi"><div class="actions"><a class="btn-edit"><svg><use href="#i-pencil"/></svg></a><a class="btn-del"><svg><use href="#i-trash"/></svg></a></div></td>
                                </tr>
                                <tr>
                                    <td class="cell-no">4</td>
                                    <td>
                                        <div class="agenda-title"><svg class="horn"><use href="#i-bullhorn"/></svg>kajian ustazah lia</div>
                                        <div class="agenda-meta"><svg class="meta-cal"><use href="#i-cal-line"/></svg>Tanggal: 28-04-2025</div>
                                        <div class="agenda-meta"><svg class="meta-clock"><use href="#i-clock-line"/></svg>Jam: 12:00 - Selesai</div>
                                    </td>
                                    <td class="cell-aksi"><div class="actions"><a class="btn-edit"><svg><use href="#i-pencil"/></svg></a><a class="btn-del"><svg><use href="#i-trash"/></svg></a></div></td>
                                </tr>
                            </tbody>
                        </table>

                        <div class="table-footer">
                            <div class="table-info">Showing 1 to 4 of 4 entries</div>
                            <div class="pagination"><a class="page-prev">Previous</a><a class="page-num">1</a><a class="page-next">Next</a></div>
                        </div>
                    </div>
                </section>
            </div>

            <footer class="footer">
                <div><strong>Copyright © 2014-2021 <a>AdminLTE.io.</a></strong> All rights reserved.</div>
                <div>Anything you want</div>
            </footer>
        </div>

        <div class="scrollbar">
            <svg width="14" height="10" viewBox="0 0 14 10"><path d="M7 0l7 10H0z" fill="#8c8c8c"/></svg>
            <div class="scroll-thumb"></div>
            <svg width="14" height="10" viewBox="0 0 14 10"><path d="M7 10L0 0h14z" fill="#8c8c8c"/></svg>
        </div>
    </div>

    <div class="taskbar">
        <div class="weather">
            <svg class="weather-icon" viewBox="0 0 32 36"><path d="M10 4a11 11 0 0 0 2 17l10-4A11 11 0 0 1 10 4z" fill="#f2a623"/><path d="M8 35a7 7 0 0 1-1-14 9 9 0 0 1 17-2 8 8 0 0 1 1 16z" fill="#a9cbf0" stroke="#7ea6d9"/></svg>
            <span class="weather-badge">5</span>
            <div class="weather-text"><div>23°C</div><div class="weather-sub">Berawan</div></div>
        </div>
        <svg class="start" viewBox="0 0 29 29">
            <defs><linearGradient id="win" x1="0" y1="0" x2="1" y2="1"><stop offset="0" stop-color="#4fd0fb"/><stop offset="1" stop-color="#0078d4"/></linearGradient></defs>
            <path d="M1 0h13v14H0V1a1 1 0 0 1 1-1zM15 0h13a1 1 0 0 1 1 1v13H15zM0 15h14v14H1a1 1 0 0 1-1-1zM15 15h14v13a1 1 0 0 1-1 1H15z" fill="url(#win)"/>
        </svg>
        <div class="task-search">
            <svg width="18" height="20" viewBox="0 0 18 20"><circle cx="8" cy="8" r="6.500" fill="none" stroke="#222" stroke-width="1.700"/><path d="M12.500 13l4 6" stroke="#222" stroke-width="1.900"/></svg>
            <span>Search</span>
            <svg class="search-art" viewBox="0 0 60 34"><ellipse cx="30" cy="29" rx="29" ry="4" fill="#2fb5c4"/><path d="M10 28C8 18 15 12 22 10 28 4 40 3 46 10c4 5 5 12 4 18z" fill="#c9b08c"/><path d="M30 28V12h11v16z" fill="#8d8373"/><path d="M33 28v-10h4v10z" fill="#30363f"/><circle cx="22" cy="7" r="2.500" fill="#7ea34b"/><circle cx="42" cy="5" r="2.500" fill="#7ea34b"/><circle cx="49" cy="12" r="2" fill="#7ea34b"/></svg>
        </div>
        <div class="task-view"><span class="tv-back"></span><span class="tv-front"></span></div>

        <div class="apps">
            <div class="app"><svg viewBox="0 0 30 30"><defs><linearGradient id="edge" x1="0" y1="0" x2="1" y2="0"><stop offset="0" stop-color="#1481c9"/><stop offset="1" stop-color="#52d18b"/></linearGradient></defs><path d="M15 0C6.500 0 0 6.500 0 14.500 0 23 6.500 30 15 30c4.500 0 8-1.500 10.500-4-5 1.500-12 .5-14-5.500-1-3.500 1-7 6-7.500 5-.5 9 0 12 2.500C30 7 24 0 15 0z" fill="url(#edge)"/><path d="M0 14.500C2 8 8 6 12 7.500c-3 1-6 4-6 9 0 5 3 10 9 13.500C6.500 30 0 23 0 14.500z" fill="#0c59a4"/></svg><i class="app-dot"></i></div>
            <div class="app"><svg viewBox="0 0 30 30"><defs><linearGradient id="cp1" x1="0" y1="0" x2="1" y2="1"><stop offset="0" stop-color="#1e9ce8"/><stop offset=".6" stop-color="#3b5fd8"/><stop offset="1" stop-color="#b05cd8"/></linearGradient><linearGradient id="cp2" x1="0" y1="0" x2="1" y2="1"><stop offset="0" stop-color="#6fcf5a"/><stop offset=".5" stop-color="#f7c33c"/><stop offset="1" stop-color="#ef5f6f"/></linearGradient></defs><path d="M15 1h5c3 0 4.500 2 5.500 5l4 14c.5 3-1 5-4 5h-5l-1-6c2-1 3-3 2-6l-2-7C19 3 17 1.500 15 1z" fill="url(#cp1)"/><path d="M16 1H11C7 1 5 3 4 7L1 17c-1 5 1 8 4 8h4c2 0 3-1 4-4l3-12c.5-3 1.500-5 3-6-1-1.500-2-2-3-2z" fill="url(#cp2)"/><path d="M9 29h9c3 0 5-2 6-5-3 2-6 1-8-1l-3 2c-1 2-2 3-4 4z" fill="#f26d6d"/></svg><i class="app-none"></i></div>
            <div class="app"><svg viewBox="0 0 30 30"><path d="M7 0h21a2 2 0 0 1 2 2v26a2 2 0 0 1-2 2H9a2 2 0 0 1-2-2z" fill="#2b7cd3"/><path d="M7 2a2 2 0 0 1 2-2h19a2 2 0 0 1 2 2v6H7z" fill="#41a5ee"/><path d="M7 15h23v7.500H7z" fill="#185abd"/><path d="M7 22.500h23V28a2 2 0 0 1-2 2H9a2 2 0 0 1-2-2z" fill="#103f91"/><rect y="7" width="15" height="15" rx="1.500" fill="#185abd"/><text class="word-w" x="7.500" y="19">W</text></svg><i class="app-none"></i></div>
            <div class="app"><svg viewBox="0 0 30 30"><rect width="30" height="30" fill="#0a78d4"/><path d="M5 12l6-2v13l-6 1zM12 10l6-2v14l-6 1zM19 8l6-2v14l-6 2z" fill="#7bd11f"/><path d="M8 8l12-4 3 1-12 4z" fill="#27ae3f"/></svg><i class="app-none"></i></div>
            <div class="app"><svg viewBox="0 0 30 30"><path d="M0 2a2 2 0 0 1 2-2h7l3 3h18v25a2 2 0 0 1-2 2H2a2 2 0 0 1-2-2z" fill="#dfa20e"/><path d="M0 6h30v22a2 2 0 0 1-2 2H2a2 2 0 0 1-2-2z" fill="#fdd563"/><path d="M5 23a2 2 0 0 1 2-2h16a2 2 0 0 1 2 2v7H5z" fill="#1f77c4"/><rect x="9" y="23.500" width="12" height="2" fill="#9cd0f5"/></svg><i class="app-dot"></i></div>
            <div class="app app-open"><svg viewBox="0 0 32 32"><circle cx="16" cy="16" r="15" fill="#ea4335"/><path d="M16 16L3 23A15 15 0 0 0 19 31z" fill="#34a853"/><path d="M16 16l3 15A15 15 0 0 0 31 14z" fill="#fbbc04"/><circle cx="16" cy="16" r="7.500" fill="#fff"/><circle cx="16" cy="16" r="5.500" fill="#4285f4"/><circle cx="25" cy="7" r="8" fill="#0c0c0c"/><path d="M19 13l2-9 5 11z" fill="#b8b2a6"/></svg><i class="app-bar"></i></div>
            <div class="app"><svg viewBox="0 0 30 30"><path d="M3 4C8-1 21-1 26 4c4 5 5 14 1 21-1 2-2 3-3 4h-4c-1-2-1-4-1-6-1 2-1 4-2 6h-4l-.5-5c-.5 2-1 4-1.500 5H7C5 27 4 24 4 21 1 16-1 9 3 4z" fill="#19a7e8"/><path d="M9 16c0-5 3-8 7-8" fill="none" stroke="#0d7fc0" stroke-width="1"/><path d="M13 19v6" stroke="#fff" stroke-width="1.200"/><path d="M24 29c2-2 3-5 3.500-8" fill="none" stroke="#444" stroke-width="1.200"/></svg><i class="app-dot"></i></div>
            <div class="app"><svg viewBox="0 0 30 30"><path d="M21 0l9 4v22l-9 4L8 18l-5 4-3-2v-10l3-2 5 4zm0 8l-8 7 8 7z" fill="#0a6fb8"/><path d="M21 0l9 4v22l-9 4z" fill="#27a0ee"/></svg><i class="app-dot"></i></div>
            <div class="app"><svg viewBox="0 0 30 30"><path d="M15 2A13 13 0 0 0 4 22l-2 6 6.500-1.700A13 13 0 1 0 15 2z" fill="none" stroke="#148a4a" stroke-width="2.700"/><path d="M10.500 8c-2 1-3 3-2 6 1.500 4.500 5 7 9 8.500 3 .5 5-1 5-3v-1l-4-2-1.500 2c-2-1-4-3-5-5l1.500-1.500-1.500-4z" fill="#148a4a"/></svg><i class="app-dot"></i></div>
        </div>

        <div class="tray">
            <svg class="tray-caret" viewBox="0 0 14 8"><path d="M1 7l6-6 6 6" fill="none" stroke="#222" stroke-width="1.500"/></svg>
            <svg class="tray-icon" viewBox="0 0 20 22"><rect x="1" y="1" width="18" height="14" fill="#aebccb" stroke="#7a8794"/><rect x="9" y="4" width="8" height="7" fill="#dde6ef"/><rect x="3" y="5" width="6" height="5" fill="#eef3f9"/><path d="M8 15h4v3h3v2H5v-2h3z" fill="#7a8794"/></svg>
            <svg class="tray-icon" viewBox="0 0 14 22"><rect width="14" height="22" rx="7" fill="#0a82ff"/><path d="M3.500 7l7 7.500L7 18V4l3.500 3.500-7 7.500" fill="none" stroke="#fff" stroke-width="1.200"/></svg>
            <svg class="tray-icon" viewBox="0 0 22 22"><rect width="22" height="22" rx="2" fill="#fff"/><path d="M8 3h6l-6 10H2z" fill="#1fa463"/><path d="M14 3l6 10h-6L11 8z" fill="#ffd04b"/><path d="M5 18l3-5h12l-3 5z" fill="#4687f4"/></svg>
            <svg class="tray-icon" viewBox="0 0 20 22"><rect width="20" height="22" fill="#e8541e"/><rect y="2" width="20" height="3" fill="#f7b267"/><rect y="17" width="20" height="3" fill="#f7b267"/><rect y="7" width="20" height="8" fill="#d01818"/><text class="tray-ccu" x="10" y="14">CCU</text></svg>
            <svg class="tray-icon" viewBox="0 0 20 22"><rect width="20" height="22" rx="2" fill="#0b1b52"/><circle cx="10" cy="11" r="7.500" fill="#fff"/><path d="M5 11l2.500-2v1.200h5V9l2.500 2-2.500 2v-1.200h-5V13z" fill="#0b1b52"/></svg>
            <svg class="tray-icon tray-cloud" viewBox="0 0 24 22"><path d="M6 16a5 5 0 0 1 0-10 6 6 0 0 1 11-1 5 5 0 0 1 1 10z" fill="#7c7f86" stroke="#333"/><circle cx="16" cy="16" r="6" fill="#d9252f"/><path d="M14 14l4 4M18 14l-4 4" stroke="#fff" stroke-width="1.200"/></svg>
            <span class="tray-lang">ENG</span>
            <svg class="tray-sys" viewBox="0 0 22 20"><path d="M1 7a14 14 0 0 1 20 0M4 10.500a10 10 0 0 1 14 0M7 14a5.500 5.500 0 0 1 8 0" fill="none" stroke="#222" stroke-width="1.500"/><circle cx="11" cy="17.500" r="1.700" fill="#222"/></svg>
            <svg class="tray-sys" viewBox="0 0 22 20"><path d="M2 7h3l5-4v14l-5-4H2z" fill="none" stroke="#222" stroke-width="1.300"/><path d="M13 7a4 4 0 0 1 0 6M16 4a8 8 0 0 1 0 12" fill="none" stroke="#999" stroke-width="1.300"/></svg>
            <svg class="tray-sys" viewBox="0 0 22 20"><rect x="2" y="6" width="17" height="11" rx="2" fill="none" stroke="#222" stroke-width="1.500"/><rect x="4" y="8" width="11" height="7" fill="#222"/><rect x="19.500" y="9" width="2" height="5" fill="#222"/><path d="M6 0v4M9 0v4M5 4h5v3" fill="none" stroke="#222" stroke-width="1.300"/></svg>
            <div class="clock"><div>12:55 AM</div><div>5/14/2025</div></div>
        </div>
    </div>
</body>
</html>
```

FILE: styles.css
```css
* {
    box-sizing: border-box;
}
html, body {
    margin: 0;
    height: 1200px;
    overflow: hidden;
}
body {
    display: flex;
    flex-direction: column;
    font-family: "Noto Sans CJK JP", "Noto Sans", sans-serif;
    font-size: 18px;
    line-height: 30px;
    color: #212529;
}
svg {
    flex: none;
    fill: currentColor;
}
.sprite {
    display: none;
}

/* browser chrome */
.tabstrip {
    height: 50px;
    background: #d3e3fd;
    display: flex;
    align-items: center;
    padding-left: 13px;
    font-family: "Open Sans", sans-serif;
    font-size: 14.4px;
    color: #444;
    position: relative;
}
.tab-list-btn {
    width: 30px;
    height: 34px;
    margin-top: -9px;
    border-radius: 10px;
    background: #e6effd;
    display: flex;
    align-items: center;
    justify-content: center;
}
.tab {
    display: flex;
    align-items: center;
    height: 42px;
    margin-top: 8px;
}
.tab-first {
    width: 299px;
    padding-left: 17px;
}
.tab-second {
    width: 299px;
    padding-left: 13px;
}
.tab-sep {
    width: 2px;
    height: 24px;
    background: #a8c7fa;
    margin-top: -2px;
}
.tab-icon {
    width: 20px;
    height: 20px;
    margin-top: -4px;
}
.tab-title {
    margin-left: 10px;
    white-space: nowrap;
    margin-top: -6px;
}
.tab-first .tab-title {
    width: 213px;
    overflow: hidden;
}
.tab-first .tab-close {
    margin-left: 11px;
}
.tab-fade {
    width: 206px;
    overflow: hidden;
    color: #555;
}
.tab-second .tab-close {
    margin-left: 21px;
}
.tab-close {
    width: 12px;
    height: 12px;
    color: #333;
    margin-top: -5px;
}
.tab-active {
    width: 291px;
    height: 42px;
    margin-left: 3px;
    background: #fff;
    border-radius: 14px 14px 0 0;
    padding-left: 11px;
    color: #1f1f1f;
    position: relative;
}
.tab-active::before,
.tab-active::after {
    content: "";
    position: absolute;
    bottom: 0;
    width: 12px;
    height: 12px;
}
.tab-active::before {
    left: -12px;
    background: radial-gradient(circle at 0 0, #d3e3fd 12px, #fff 12.5px);
}
.tab-active::after {
    right: -12px;
    background: radial-gradient(circle at 100% 0, #d3e3fd 12px, #fff 12.5px);
}
.tab-active .tab-title {
    width: 225px;
    margin-left: 9px;
}
.globe {
    width: 18px;
    height: 18px;
    color: #474747;
}
.new-tab {
    width: 14px;
    height: 14px;
    margin-left: 17px;
    margin-top: -1px;
}
.win-buttons {
    margin-left: auto;
    display: flex;
    gap: 43px;
    padding-right: 22px;
    margin-top: -2px;
}
.toolbar {
    height: 58px;
    background: #fff;
    border-bottom: 2px solid #e0e0e0;
    display: flex;
    align-items: center;
    padding: 1px 0 0 19px;
    font-family: "Open Sans", sans-serif;
    border-radius: 10px 10px 0 0;
    box-shadow: 0 -10px 0 #d3e3fd;
}
.nav-btn {
    width: 18px;
    height: 18px;
    margin-right: 27px;
}
.nav-forward {
    margin-right: 28px;
}
.nav-reload {
    margin-right: 21px;
}
.omnibox {
    width: 1598px;
    height: 42px;
    background: #edf2fa;
    border-radius: 21px;
    display: flex;
    align-items: center;
    padding-left: 6px;
}
.site-info {
    width: 30px;
    height: 30px;
    border-radius: 50%;
    background: #fff;
    display: flex;
    align-items: center;
    justify-content: center;
}
.url {
    margin-left: 11px;
    font-size: 16.8px;
    color: #555;
    white-space: nowrap;
}
.url b {
    font-weight: 400;
    color: #1f1f1f;
}
.omni-translate {
    width: 21px;
    height: 21px;
    margin-left: auto;
}
.omni-star {
    width: 20px;
    height: 19px;
    margin: 0 19px 0 20px;
}
.tool-puzzle {
    width: 20px;
    height: 20px;
    margin-left: 24px;
}
.tool-sep {
    width: 2px;
    height: 20px;
    background: #d3e3fd;
    margin-left: 21px;
}
.avatar {
    width: 25px;
    height: 25px;
    margin-left: 21px;
}
.kebab {
    width: 4px;
    height: 18px;
    margin-left: 30px;
}

/* page */
.page {
    height: 1032px;
    display: flex;
    background: #f4f6f9;
    overflow: hidden;
}
.sidebar {
    width: 313px;
    flex: none;
    background: #fff;
    box-shadow: 0 14px 28px rgba(0, 0, 0, .25), 0 10px 10px rgba(0, 0, 0, .22);
    position: relative;
    z-index: 2;
}
.brand {
    height: 169px;
    padding-top: 17px;
    border-bottom: 1px solid #dee2e6;
    display: flex;
    flex-direction: column;
    align-items: center;
}
.brand-logo {
    width: 94px;
    height: 76px;
    fill: #28a745;
}
.brand-name {
    font-size: 35.8px;
    line-height: 40px;
    font-weight: 700;
    color: #343a40;
    margin-top: 3px;
}
.user-name {
    height: 71px;
    border-bottom: 1px solid #dee2e6;
    text-align: center;
    font-size: 22.4px;
    line-height: 67px;
    font-weight: 700;
    color: #28a745;
}
.menu {
    padding: 10px 10px 0;
    display: flex;
    flex-direction: column;
    gap: 4px;
}
.menu-item {
    height: 50px;
    display: flex;
    align-items: center;
    padding: 0 0 2px 61px;
    border-radius: 5px;
    color: #343a40;
    position: relative;
}
.menu-item.active {
    background: #28a745;
    color: #fff;
    box-shadow: 0 1px 3px rgba(0, 0, 0, .12), 0 1px 2px rgba(0, 0, 0, .24);
}
.menu-icon {
    position: absolute;
    left: 20px;
    top: -1px;
    width: 34px;
    height: 50px;
    display: flex;
    align-items: center;
    justify-content: center;
}
.w21 {
    width: 21px;
    height: 22px;
}
.w24 {
    width: 25px;
    height: 22px;
}
.w25 {
    width: 25px;
    height: 22px;
}
.w27 {
    width: 28px;
    height: 22px;
}
.chevron {
    width: 10px;
    height: 20px;
    position: absolute;
    left: 263px;
    top: 14px;
}
.badge-new {
    position: absolute;
    left: 231px;
    top: 14px;
    width: 42px;
    height: 23px;
    border-radius: 4px;
    background: #dc3545;
    color: #fff;
    font-size: 14.4px;
    line-height: 23px;
    font-weight: 700;
    text-align: center;
}

.main {
    flex: 1;
    min-width: 0;
    display: flex;
    flex-direction: column;
}
.navbar {
    height: 72px;
    flex: none;
    background: #fff;
    border-bottom: 1px solid #dee2e6;
    display: flex;
    align-items: center;
    padding: 0 31px 1px 30px;
    color: rgba(0, 0, 0, .5);
}
.nav-bars {
    width: 18px;
    height: 20px;
    margin-right: 39px;
}
.nav-link {
    margin-right: 40px;
}
.nav-right {
    margin-left: auto;
    display: flex;
    align-items: center;
}
.nav-expand {
    width: 18px;
    height: 20px;
    margin-right: 40px;
}
.nav-logout {
    display: flex;
    align-items: center;
    gap: 3px;
}
.logout-icon {
    width: 20px;
    height: 20px;
}
.content {
    padding: 0 20px 0 19px;
    flex: none;
}
.content-header {
    height: 91px;
    display: flex;
    align-items: flex-start;
    justify-content: space-between;
    padding-top: 17px;
}
.content-header h1 {
    margin: 0;
    font-size: 32.4px;
    line-height: 43px;
    font-weight: 400;
}
.breadcrumb {
    color: #6c757d;
    margin-top: 4px;
}
.breadcrumb a {
    color: #007bff;
}
.crumb-sep {
    padding: 0 10px;
}
.card {
    height: 792px;
    background: #fff;
    border-radius: 5px;
    box-shadow: 0 0 1px rgba(0, 0, 0, .125), 0 1px 3px rgba(0, 0, 0, .2);
}
.card-header {
    height: 78px;
    background: #28a745;
    border-radius: 5px 5px 0 0;
    color: #fff;
    display: flex;
    justify-content: space-between;
    padding: 15px 13px 0 25px;
}
.card-header h3 {
    margin: -1px 0 0;
    font-size: 19.8px;
    line-height: 28px;
    font-weight: 400;
}
.btn-add {
    height: 47px;
    width: 121px;
    background: #f8f9fa;
    border: 1px solid #ddd;
    border-radius: 5px;
    font: inherit;
    color: #444;
    display: flex;
    align-items: center;
    justify-content: center;
    gap: 3px;
    padding: 0 0 4px;
}
.plus-icon {
    width: 18px;
    height: 20px;
}
.card-body {
    padding: 25px 25px 0;
}
.table-controls {
    height: 38px;
    display: flex;
    justify-content: space-between;
    align-items: flex-start;
    margin-bottom: 19px;
}
.length, .search {
    height: 38px;
    display: flex;
    align-items: center;
    white-space: pre;
    padding-bottom: 5px;
}
.select {
    width: 69px;
    height: 38px;
    margin-bottom: -5px;
    border: 1px solid #ced4da;
    border-radius: 5px;
    font-size: 14.4px;
    color: #495057;
    display: flex;
    align-items: center;
    justify-content: space-between;
    padding: 0 15px 0 10px;
}
.search input {
    width: 220px;
    height: 38px;
    margin: 0 0 -5px 5px;
    border: 1px solid #ced4da;
    border-radius: 5px;
}
.agenda-table {
    width: 1500px;
    border-collapse: collapse;
    table-layout: fixed;
}
.agenda-table th {
    height: 61px;
    background: #212529;
    color: #fff;
    font-weight: 700;
    padding: 0 37px 2px 15px;
    border: 1px solid #32383e;
    border-bottom-width: 2px;
    position: relative;
    text-align: center;
}
.col-no {
    width: 116px;
}
.col-aksi {
    width: 204px;
}
.sort {
    position: absolute;
    right: 10px;
    top: 22px;
    width: 22px;
    height: 14px;
    color: #6b6d70;
}
.sort-asc {
    --up: #fff;
}
.sort-up {
    fill: var(--up, currentColor);
}
.agenda-table td {
    height: 121.4px;
    padding: 16px 15px 12px;
    border: 1px solid #dee2e6;
    vertical-align: top;
}
.agenda-table tbody tr:nth-child(odd) td {
    background: #f2f2f2;
}
.agenda-table .cell-no {
    text-align: center;
    padding: 16px 0 0;
}
.agenda-title {
    font-weight: 700;
    display: flex;
    align-items: center;
    gap: 5px;
    line-height: 30px;
    margin-bottom: 1px;
}
.horn {
    width: 22px;
    height: 20px;
    color: #28a745;
}
.agenda-meta {
    font-size: 14.4px;
    line-height: 30px;
    display: flex;
    align-items: center;
    gap: 4px;
}
.meta-cal {
    width: 14px;
    height: 16px;
}
.meta-clock {
    width: 16px;
    height: 16px;
}
.agenda-table .cell-aksi {
    padding: 16px 0 0;
}
.actions {
    display: flex;
    gap: 4px;
    margin-left: 61px;
}
.btn-edit, .btn-del {
    height: 38px;
    border-radius: 4px;
    display: flex;
    align-items: center;
    justify-content: center;
}
.btn-edit {
    width: 39px;
    background: #ffc107;
    color: #212529;
}
.btn-del {
    width: 38px;
    background: #dc3545;
    color: #fff;
}
.btn-edit svg, .btn-del svg {
    width: 18px;
    height: 19px;
}
.table-footer {
    display: flex;
    justify-content: space-between;
    align-items: flex-start;
    margin-top: 11px;
}
.table-info {
    padding-top: 13px;
}
.pagination {
    display: flex;
    height: 47px;
    border: 1px solid #dee2e6;
    border-radius: 5px;
    color: #6c757d;
    line-height: 45px;
}
.pagination a {
    text-align: center;
}
.page-prev {
    width: 102px;
}
.page-num {
    width: 42px;
    height: 47px;
    margin-top: -1px;
    background: #007bff;
    color: #fff;
    line-height: 47px;
}
.page-next {
    width: 68px;
}
.footer {
    margin-top: 20px;
    flex: 1;
    background: #fff;
    border-top: 1px solid #dee2e6;
    padding: 19px 21px 0 19px;
    display: flex;
    justify-content: space-between;
    color: #869099;
}
.footer a {
    color: #007bff;
}
.scrollbar {
    width: 18px;
    flex: none;
    background: #fbfbfb;
    display: flex;
    flex-direction: column;
    align-items: center;
    padding: 7px 0 5px 3px;
    position: relative;
    z-index: 1;
}
.scroll-thumb {
    width: 13px;
    height: 974px;
    margin: 7px 0 21px;
    border-radius: 7px;
    background: #8c8c8c;
}

/* windows taskbar */
.taskbar {
    height: 60px;
    background: linear-gradient(90deg, #e6eff6, #d3e2ec 40%, #d5e3ec);
    border-top: 1px solid #b5c0c9;
    display: flex;
    align-items: center;
    font-family: "Open Sans", sans-serif;
    font-size: 14px;
    line-height: 20px;
    color: #1a1a1a;
    position: relative;
    z-index: 3;
}
.weather {
    width: 436px;
    display: flex;
    align-items: center;
    padding-left: 25px;
    position: relative;
}
.weather-icon {
    width: 32px;
    height: 36px;
}
.weather-badge {
    position: absolute;
    left: 38px;
    top: -10px;
    width: 20px;
    height: 22px;
    border-radius: 50%;
    background: #c42b1c;
    color: #fff;
    font-size: 13px;
    line-height: 22px;
    text-align: center;
}
.weather-text {
    margin: -2px 0 0 7px;
}
.weather-sub {
    color: #555;
}
.start {
    width: 29px;
    height: 29px;
}
.task-search {
    width: 273px;
    height: 39px;
    margin-left: 18px;
    border-radius: 20px;
    background: #f1f6f9;
    border: 1px solid #bcc8d1;
    display: flex;
    align-items: center;
    padding-left: 13px;
    font-size: 16px;
    color: #555;
}
.task-search span {
    margin-left: 14px;
}
.search-art {
    width: 60px;
    height: 34px;
    margin-left: auto;
    margin-right: 5px;
}
.task-view {
    width: 24px;
    height: 24px;
    margin-left: 16px;
    position: relative;
}
.tv-back, .tv-front {
    position: absolute;
    display: block;
    border-radius: 2px;
}
.tv-back {
    left: 0;
    bottom: 0;
    width: 22px;
    height: 20px;
    background: #2b2b2b;
}
.tv-front {
    right: 0;
    top: 0;
    width: 13px;
    height: 14px;
    background: #eceff1;
}
.apps {
    display: flex;
    margin-left: 19px;
}
.app {
    width: 55px;
    height: 60px;
    display: flex;
    align-items: center;
    justify-content: center;
    position: relative;
}
.app svg {
    width: 30px;
    height: 30px;
}
.app-open::before {
    content: "";
    position: absolute;
    left: 4px;
    top: 5px;
    width: 48px;
    height: 48px;
    border-radius: 5px;
    background: rgba(255, 255, 255, .6);
}
.app-open svg {
    position: relative;
}
.app-dot, .app-bar {
    position: absolute;
    bottom: 3px;
    left: 24px;
    width: 7px;
    height: 4px;
    border-radius: 2px;
    background: #6f7a82;
}
.app-bar {
    left: 18px;
    width: 20px;
    background: #0078d4;
}
.word-w {
    font-size: 12px;
    font-weight: 700;
    fill: #fff;
    text-anchor: middle;
}
.tray {
    margin-left: auto;
    display: flex;
    align-items: center;
    padding-right: 24px;
}
.tray-caret {
    width: 14px;
    height: 8px;
    margin-right: 22px;
}
.tray-icon {
    width: 20px;
    height: 22px;
    margin-right: 20px;
}
.tray-cloud {
    width: 24px;
    margin-right: 20px;
}
.tray-ccu {
    font-size: 7px;
    font-weight: 700;
    fill: #fff;
    text-anchor: middle;
}
.tray-lang {
    width: 30px;
    margin-right: 21px;
}
.tray-sys {
    width: 22px;
    height: 20px;
    margin-right: 8px;
}
.clock {
    width: 70px;
    margin-left: 10px;
    text-align: right;
    font-size: 14.4px;
    line-height: 21px;
    margin-top: -2px;
}
```
